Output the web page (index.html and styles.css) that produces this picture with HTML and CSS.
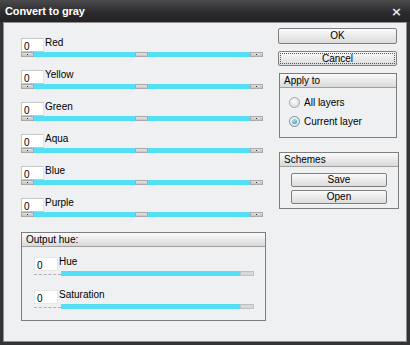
FILE: index.html
```html
<!DOCTYPE html>
<html lang="en">
<head>
    <meta charset="UTF-8">
    <title>Convert to gray</title>
    <link rel="stylesheet" href="styles.css">
</head>
<body>
    <div class="window">
        <div class="titlebar">
            <span class="title">Convert to gray</span>
            <span class="close">&times;</span>
        </div>
        <div class="content">
            <div class="left-col">
                <div class="slider-row">
                    <div class="slider-head"><span class="num">0</span><span class="label">Red</span></div>
                    <div class="track"><span class="thumb"></span><span class="fill"></span><span class="thumb"></span><span class="mid"></span></div>
                </div>
                <div class="slider-row">
                    <div class="slider-head"><span class="num">0</span><span class="label">Yellow</span></div>
                    <div class="track"><span class="thumb"></span><span class="fill"></span><span class="thumb"></span><span class="mid"></span></div>
                </div>
                <div class="slider-row">
                    <div class="slider-head"><span class="num">0</span><span class="label">Green</span></div>
                    <div class="track"><span class="thumb"></span><span class="fill"></span><span class="thumb"></span><span class="mid"></span></div>
                </div>
                <div class="slider-row">
                    <div class="slider-head"><span class="num">0</span><span class="label">Aqua</span></div>
                    <div class="track"><span class="thumb"></span><span class="fill"></span><span class="thumb"></span><span class="mid"></span></div>
                </div>
                <div class="slider-row">
                    <div class="slider-head"><span class="num">0</span><span class="label">Blue</span></div>
                    <div class="track"><span class="thumb"></span><span class="fill"></span><span class="thumb"></span><span class="mid"></span></div>
                </div>
                <div class="slider-row">
                    <div class="slider-head"><span class="num">0</span><span class="label">Purple</span></div>
                    <div class="track"><span class="thumb"></span><span class="fill"></span><span class="thumb"></span><span class="mid"></span></div>
                </div>

                <div class="group hue-group">
                    <div class="group-head">Output hue:</div>
                    <div class="group-body">
                        <div class="slider-row small">
                            <div class="slider-head"><span class="num">0</span><span class="label">Hue</span></div>
                            <div class="track flat"><span class="stub"></span><span class="fill"></span><span class="end"></span></div>
                        </div>
                        <div class="slider-row small">
                            <div class="slider-head"><span class="num">0</span><span class="label">Saturation</span></div>
                            <div class="track flat"><span class="stub"></span><span class="fill"></span><span class="end"></span></div>
                        </div>
                    </div>
                </div>
            </div>

            <div class="right-col">
                <button class="btn">OK</button>
                <button class="btn focused">Cancel</button>

                <div class="group apply-group">
                    <div class="group-head">Apply to</div>
                    <div class="group-body">
                        <label class="radio"><span class="dot"></span>All layers</label>
                        <label class="radio"><span class="dot checked"></span>Current layer</label>
                    </div>
                </div>

                <div class="group schemes-group">
                    <div class="group-head">Schemes</div>
                    <div class="group-body">
                        <button class="btn small">Save</button>
                        <button class="btn small">Open</button>
                    </div>
                </div>
            </div>
        </div>
    </div>
</body>
</html>
```

FILE: styles.css
```css
body {
    margin: 0;
    padding: 0;
    font-family: "Liberation Sans", Arial, sans-serif;
    font-size: 10px;
    color: #000;
    background: #2e2e2e;
}

.window {
    width: 410px;
    height: 345px;
    box-sizing: border-box;
    background: #333436;
    display: flex;
    flex-direction: column;
    padding: 0 3px 3px 3px;
}

.titlebar {
    height: 22px;
    display: flex;
    align-items: center;
    justify-content: space-between;
    margin: 0 -3px;
    padding: 0 8px 0 5px;
    background: linear-gradient(#4b4b4d, #2a2a2c 60%, #242426);
    color: #fff;
}

.title {
    font-family: "Liberation Sans", Arial, sans-serif;
    font-weight: bold;
    font-size: 11px;
    letter-spacing: -0.1px;
}

.close {
    font-family: "DejaVu Sans", sans-serif;
    font-weight: bold;
    font-size: 13px;
    color: #e8e8e8;
}

.content {
    flex: 1;
    display: flex;
    gap: 12px;
    background: #eff0f1;
    border: 1px solid #8e8e8e;
    padding: 5px 8px 0 17px;
}

.left-col {
    width: 246px;
    padding-top: 10px;
}

.slider-row {
    height: 32px;
}

.slider-head {
    display: flex;
    align-items: flex-start;
    height: 14px;
}

.num {
    width: 23px;
    height: 14px;
    box-sizing: border-box;
    background: #fff;
    border: 1px solid #c6c6c6;
    border-right-color: #e4e4e4;
    padding: 3px 0 0 2px;
    line-height: 10px;
    font-size: 10px;
}

.label {
    padding-left: 1px;
    line-height: 10px;
}

.track {
    position: relative;
    display: flex;
    width: 242px;
    height: 5px;
    box-sizing: border-box;
}

.track .fill {
    flex: 1;
    background: #55dff6;
}

.track .thumb {
    width: 13px;
    box-sizing: border-box;
    background: linear-gradient(#e2e2e2, #c4c4c4);
    border: 1px solid #a8a8a8;
    position: relative;
}

.track .thumb::after {
    content: "";
    position: absolute;
    left: 5px;
    top: 1px;
    width: 1px;
    height: 1px;
    background: #333;
}

.track .mid {
    position: absolute;
    left: 114px;
    top: 0;
    width: 13px;
    height: 5px;
    box-sizing: border-box;
    background: linear-gradient(#e6e6e6, #c8c8c8);
    border: 1px solid #a8a8a8;
}

.hue-group {
    margin-top: 2px;
    height: 89px;
}

.group {
    border: 1px solid #7e7e7e;
    box-sizing: border-box;
    background: #eff0f1;
}

.group-head {
    height: 13px;
    line-height: 13px;
    padding-left: 4px;
    background: linear-gradient(#fafafa, #d9d9d9);
    border-bottom: 1px solid #a0a0a0;
}

.hue-group .group-body {
    padding: 10px 0 0 12px;
}

.slider-row.small {
    height: 33px;
}

.slider-row.small .num {
    width: 24px;
    border-color: #e8e8e8;
}

.track.flat {
    width: 220px;
    height: 5px;
}

.track.flat .stub {
    width: 27px;
    border-bottom: 1px dashed #b0b0b0;
    margin-bottom: 1px;
}

.track.flat .end {
    width: 14px;
    background: #d8d8d8;
    border: 1px solid #c0c0c0;
    box-sizing: border-box;
}

.right-col {
    width: 120px;
    display: flex;
    flex-direction: column;
}

.btn {
    display: block;
    width: 119px;
    height: 16px;
    padding: 0;
    font-family: "Liberation Sans", Arial, sans-serif;
    font-size: 10px;
    line-height: 12px;
    color: #000;
    background: linear-gradient(#fbfbfb, #eaeaea 50%, #dcdcdc);
    border: 1px solid #7f7f7f;
    border-radius: 2px;
    margin-bottom: 7px;
}

.btn.focused {
    outline: 1px dotted #555;
    outline-offset: -3px;
    height: 15px;
}

.apply-group {
    width: 118px;
    height: 65px;
    margin-left: 1px;
}

.apply-group .group-body {
    padding: 5px 0 0 9px;
}

.radio {
    display: flex;
    align-items: center;
    height: 19px;
}

.dot {
    width: 11px;
    height: 11px;
    box-sizing: border-box;
    border-radius: 50%;
    border: 1px solid #a4a4a4;
    background: radial-gradient(circle at 40% 35%, #fff, #d4d4d4);
    margin-right: 4px;
    position: relative;
}

.dot.checked {
    border-color: #7a8d9a;
}

.dot.checked::after {
    content: "";
    position: absolute;
    left: 2px;
    top: 2px;
    width: 5px;
    height: 5px;
    border-radius: 50%;
    background: radial-gradient(circle at 40% 35%, #9fe0f4, #2a8fb8);
}

.schemes-group {
    width: 120px;
    height: 57px;
    margin-top: 14px;
    margin-left: 1px;
}

.schemes-group .group-body {
    padding: 6px 0 0 11px;
}

.btn.small {
    width: 96px;
    height: 14px;
    margin-bottom: 3px;
}
```
